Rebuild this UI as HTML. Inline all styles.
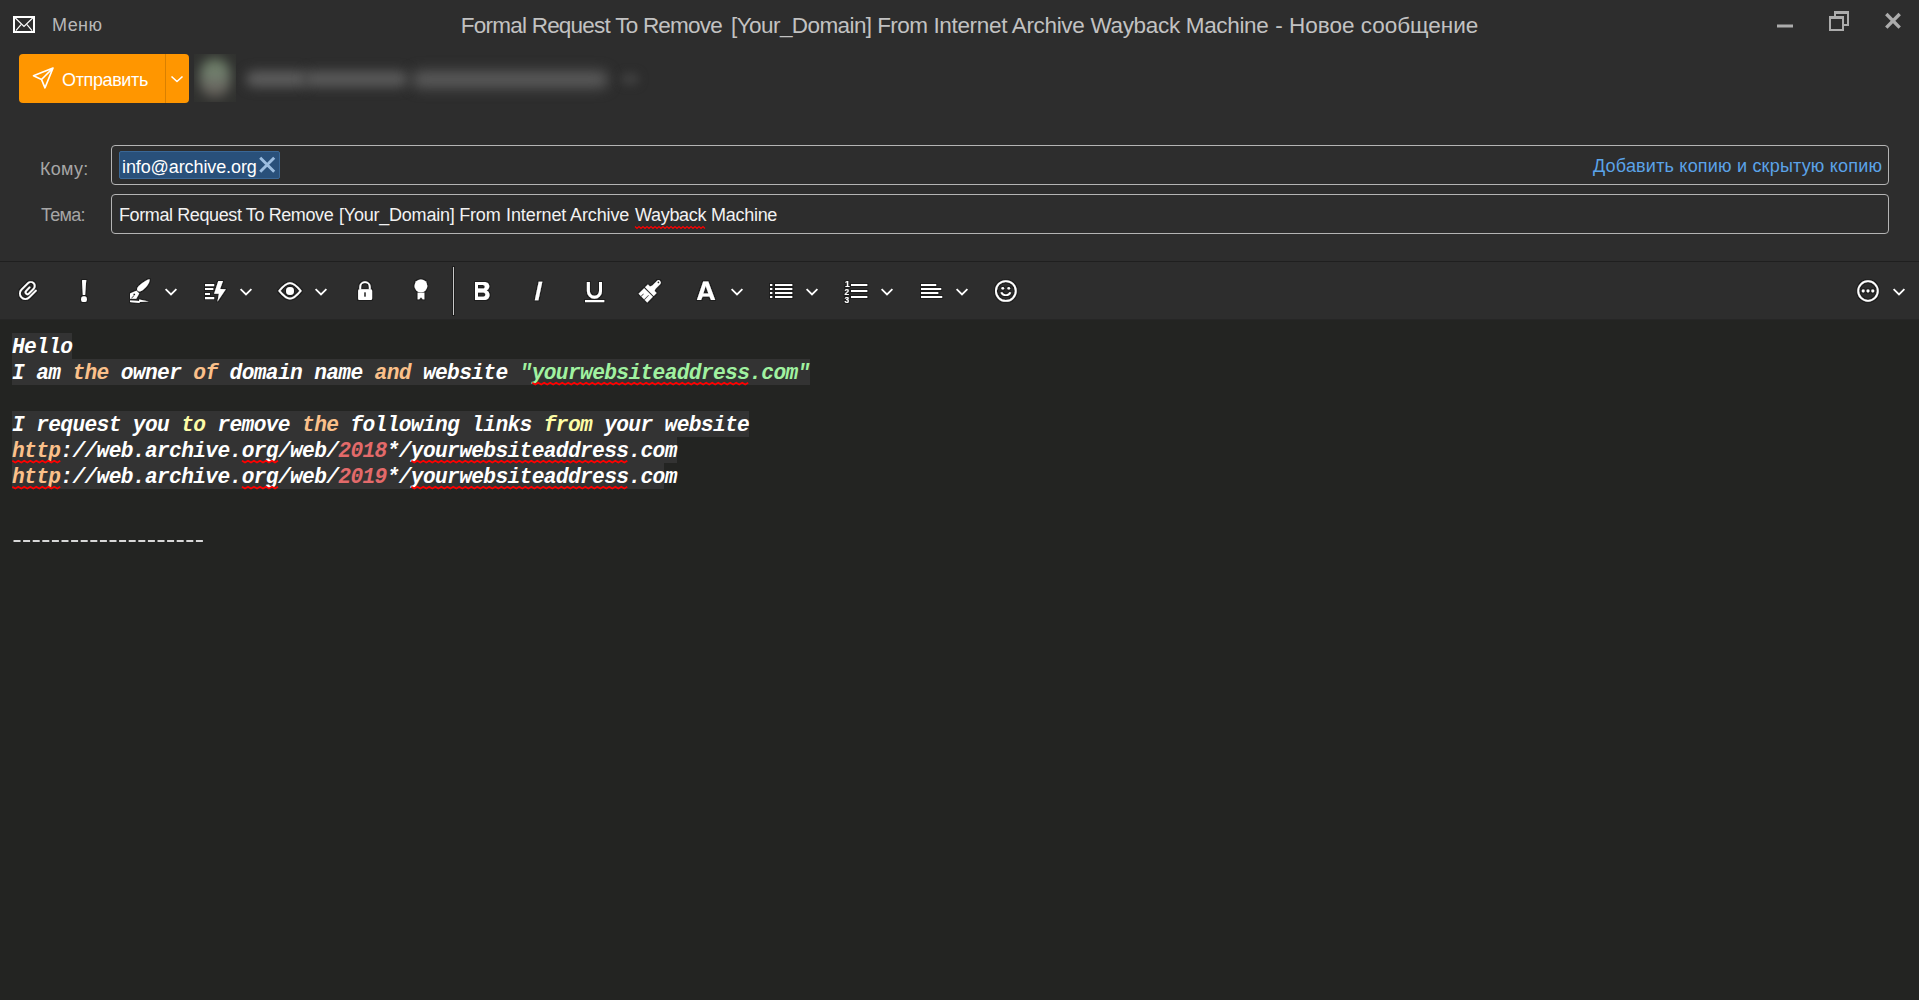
<!DOCTYPE html>
<html><head><meta charset="utf-8">
<style>
*{margin:0;padding:0;box-sizing:border-box}
html,body{width:1919px;height:1000px;overflow:hidden;background:#232422;font-family:"Liberation Sans",sans-serif}
.abs{position:absolute}
#hdr{position:absolute;left:0;top:0;width:1919px;height:261px;background:#2d2d2d}
#hline{position:absolute;left:0;top:261px;width:1919px;height:1px;background:#1f1f1f}
#tb{position:absolute;left:0;top:262px;width:1919px;height:58px;background:#2d2d2d}
.t{position:absolute;white-space:pre;line-height:1;transform-origin:0 0}
.ttl{top:15px;font-size:22.5px;color:#c2c2c2}
#menu{left:52px;top:16px;font-size:18px;letter-spacing:0.45px;color:#b8b8b8}
#send{left:19px;top:54px;width:170px;height:49px;background:#ff9600;border-radius:4px}
#senddiv{left:165px;top:54px;width:1px;height:49px;background:#d98000}
#sendtxt{left:62px;top:71px;font-size:18px;letter-spacing:-0.37px;color:#fff}
.box{position:absolute;border:1px solid #b4b4b4;border-radius:4px}
#tobox{left:111px;top:145px;width:1778px;height:40px}
#subbox{left:111px;top:194px;width:1778px;height:40px}
#chip{left:119px;top:151px;width:161px;height:28px;background:#29507a;border:1px solid #3a6796;border-radius:2px}
#lblto{left:40px;top:160px;font-size:18px;letter-spacing:0.3px;color:#a6a6a6}
#lblsub{left:41px;top:206px;font-size:18px;letter-spacing:-0.7px;color:#a6a6a6}
#chiptxt{left:122px;top:158px;font-size:18px;letter-spacing:-0.1px;color:#fff}
.stx{top:206px;font-size:18px;color:#f2f2f2}
#addcc{left:1593px;top:157px;font-size:18px;letter-spacing:0.2px;color:#5ba3e8}
#editor{position:absolute;left:0;top:320px;width:1919px;height:680px;background:#232422}
.ln{position:absolute;left:12px;height:26px;background:#333333}
.code{position:absolute;left:12px;font-family:"Liberation Mono",monospace;font-weight:bold;font-style:italic;font-size:21.2px;letter-spacing:-0.63px;line-height:26px;color:#fff;white-space:pre}
.o{color:#fbc08a}.y{color:#fdfca6}.g{color:#a0f2a0}.r{color:#e36a6a}
</style></head><body>
<div id="hdr"></div>
<div id="hline"></div>
<div id="tb"></div>
<div id="editor"></div>
<div class="abs" style="left:0;top:319px;width:1919px;height:1px;background:#262626"></div>

<!-- title bar -->
<svg class="abs" style="left:13px;top:16px" width="22" height="17" viewBox="0 0 22 17">
<rect x="1" y="1" width="20" height="15" fill="none" stroke="#fff" stroke-width="2"/>
<path d="M2.3 2 L11 10.4 L19.7 2 M2.9 14.6 L8 8.6 M19.1 14.6 L14 8.6" fill="none" stroke="#fff" stroke-width="1.2"/>
</svg>
<div id="menu" class="t">Меню</div>
<div class="t ttl" style="left:460.75px;letter-spacing:-0.766px">Formal Request To Remove</div><div class="t ttl" style="left:731.1px;letter-spacing:-0.583px">[Your_Domain] From</div><div class="t ttl" style="left:933.4px;letter-spacing:-0.328px">Internet Archive Wayback Machine</div><div class="t ttl" style="left:1275.25px;letter-spacing:-0.009px">- Новое сообщение</div>

<div id="send" class="abs"></div>
<div id="senddiv" class="abs"></div>
<div id="sendtxt" class="t">Отправить</div>


<!-- blurred sender -->
<div class="abs" style="left:194px;top:54px;width:42px;height:48px;overflow:hidden;background:#30312f">
  <div class="abs" style="left:6px;top:4px;width:30px;height:40px;border-radius:15px;background:linear-gradient(#66765f,#72806f 40%,#696660 75%,#5a5650);filter:blur(6px)"></div>
</div>
<div class="abs" style="left:236px;top:50px;width:420px;height:56px;overflow:hidden">
  <div class="abs" style="left:10px;top:21px;width:62px;height:16px;border-radius:8px;background:#5d5d5d;filter:blur(6px)"></div>
  <div class="abs" style="left:68px;top:21px;width:104px;height:16px;border-radius:8px;background:#5a5a5a;filter:blur(6px)"></div>
  <div class="abs" style="left:176px;top:21px;width:196px;height:17px;border-radius:8px;background:#5a5a5a;filter:blur(6.5px)"></div>
  <div class="abs" style="left:385px;top:23px;width:18px;height:12px;border-radius:5px;background:#3e3e3e;filter:blur(4px)"></div>
</div>
<!-- fields -->
<div id="lblto" class="t">Кому:</div>
<div id="lblsub" class="t">Тема:</div>
<div id="tobox" class="box"></div>
<div id="subbox" class="box"></div>
<div id="chip" class="abs"></div>
<div id="chiptxt" class="t">info@archive.org</div>
<div class="t stx" style="left:119.0px;letter-spacing:-0.395px">Formal Request To Remove</div><div class="t stx" style="left:339.0px;letter-spacing:-0.222px">[Your_Domain] From</div><div class="t stx" style="left:506.1px;letter-spacing:-0.119px">Internet Archive</div><div class="t stx" style="left:634.9px;letter-spacing:-0.279px">Wayback Machine</div>
<div id="addcc" class="t">Добавить копию и скрытую копию</div>


<svg class="abs" style="left:0;top:0" width="1919" height="320" viewBox="0 0 1919 320">
<defs><filter id="halo" x="-20%" y="-20%" width="140%" height="140%"><feMorphology in="SourceAlpha" operator="dilate" radius="1" result="d"/><feGaussianBlur in="d" stdDeviation="0.4" result="b"/><feFlood flood-color="#111" flood-opacity="0.6"/><feComposite in2="b" operator="in" result="h"/><feMerge><feMergeNode in="h"/><feMergeNode in="SourceGraphic"/></feMerge></filter></defs>
<g fill="#fff" stroke="none" filter="url(#halo)">
<!-- paperclip -->
<path transform="translate(28 291) rotate(-45)" fill="none" stroke="#fff" stroke-width="1.8" stroke-linecap="round" d="M5.8 5.4 L-3.7 5.4 A5.45 5.45 0 0 1 -3.7 -5.5 L5.5 -5.5 A3.95 3.95 0 0 1 5.5 2.4 L-1.16 2.4 A1.9 1.9 0 0 1 -1.16 -1.4 L3.6 -1.4"/>
<!-- exclamation -->
<path d="M82 280.6 Q82 280 82.6 280 L85.6 280 Q86.2 280 86.2 280.6 L85.1 295 L82.9 295 Z"/>
<circle cx="84" cy="299.2" r="2.9"/>
<!-- signature pen -->
<path transform="translate(137.6 291) rotate(-43.5)" d="M0.3 0 C0.3 -2.6 3 -3 7 -2.8 C11 -2.6 15 -1.6 16.8 -0.4 C15.5 1.6 11.5 3 7 3 C2.5 3 0.3 2.2 0.3 0 Z"/>
<path d="M130 293.6 L136.4 290.8 L139.2 293.4 L136.2 298.8 L130 298.8 Z M133.2 294.6 a1 1 0 1 0 2 0 a1 1 0 1 0 -2 0 Z M131.2 297.9 L133.6 295.3 L134.2 295.9 L131.8 298.4 Z" fill-rule="evenodd"/>
<path d="M130 300.4 L139 301 L139.2 299.5 L148.8 301.5 L139.6 302 L139.6 302.9 L130 301.9 Z"/>
<!-- lines+bolt -->
<rect x="205" y="284" width="9.1" height="2.1"/>
<rect x="205" y="288" width="8.2" height="2"/>
<rect x="205" y="293" width="5" height="2"/>
<rect x="205" y="297" width="9.1" height="2.1"/>
<path d="M218.3 281 L223 281 L220.1 288.9 L225.8 289.2 L217.4 301.8 L218.9 293.7 L214.1 293.7 Z"/>
<!-- eye -->
<path d="M279.3 290.9 C283.2 286.2 286.2 283.2 290 283.2 C293.8 283.2 296.8 286.2 300.7 290.9 C296.8 295.6 293.8 298.6 290 298.6 C286.2 298.6 283.2 295.6 279.3 290.9 Z" fill="none" stroke="#fff" stroke-width="1.7" stroke-linejoin="round"/>
<circle cx="290" cy="291" r="4"/>
<!-- lock -->
<path d="M360.2 289.5 L360.2 287 A4.8 4.8 0 0 1 369.8 287 L369.8 289.5" fill="none" stroke="#fff" stroke-width="1.8"/>
<path d="M359.6 289.2 L370.6 289.2 Q372.1 289.2 372.1 290.7 L372.1 298.5 Q372.1 300 370.6 300 L359.6 300 Q358.1 300 358.1 298.5 L358.1 290.7 Q358.1 289.2 359.6 289.2 Z M364.1 292.2 L364.1 296.7 L365.9 296.7 L365.9 292.2 Z" fill-rule="evenodd"/>
<!-- award -->
<circle cx="420.9" cy="285.9" r="6.4"/>
<path d="M417.7 292.8 L424.3 292.8 L424.3 299.3 L422.8 299.3 L421 297.3 L419.2 299.3 L417.7 299.3 Z"/>
<!-- separator -->
<rect x="453" y="267" width="1" height="48" fill="#c8c8c8"/>
<!-- B -->
<path fill-rule="evenodd" d="M475 282 L484 282 C487.6 282 489.3 284.2 489.3 286.3 C489.3 288.2 488.2 289.6 486.6 290.4 C488.6 291.2 489.5 293 489.5 295 C489.5 298 487.2 300 484 300 L475 300 Z M478 285 L483 285 C484.2 285 484.8 285.9 484.8 286.8 C484.8 287.8 484.2 288.6 483 288.6 L478 288.6 Z M478 292.4 L483.3 292.4 C484.6 292.4 485.4 293.4 485.4 294.5 C485.4 295.7 484.6 296.7 483.3 296.7 L478 296.7 Z"/>
<!-- I -->
<path d="M538.7 281.7 L542.3 281.7 L538.4 300.3 L534.8 300.3 Z"/>
<!-- U -->
<path d="M588.4 282 L588.4 291.2 A6.05 6.05 0 0 0 600.5 291.2 L600.5 282" fill="none" stroke="#fff" stroke-width="3"/>
<rect x="585" y="300" width="19.2" height="2.1"/>
<!-- brush -->
<g transform="translate(650 291) rotate(-45)">
<path d="M-0.9 -6.1 L3.2 -6.1 L3.2 -3.3 Q4.6 -2.4 5.6 -2.3 L12 -2.3 A2.3 2.3 0 0 1 12 2.3 L5.6 2.3 Q4.6 2.4 3.2 3.3 L3.2 6.1 L-0.9 6.1 Z"/>
<circle cx="12.1" cy="-0.2" r="0.85" fill="#2d2d2d"/>
<path d="M-2.1 -6.1 L-2.1 6.1 L-10 6.1 L-10 -6.1 Z M-10.1 -2.9 L-6.5 -2.9 L-6.5 -2.1 L-10.1 -2.1 Z M-10.1 1.7 L-4 1.7 L-4 2.5 L-10.1 2.5 Z" fill-rule="evenodd"/>
</g>
<!-- A -->
<path fill-rule="evenodd" d="M703.2 281.6 L708.3 281.6 L715.2 300 L711 300 L709.4 296.4 L702.6 296.4 L701.1 300 L696.9 300 Z M705.7 285.9 L703.3 293.4 L708.4 293.4 Z"/>
<!-- bullet list -->
<rect x="770" y="284" width="2.2" height="2"/><rect x="770" y="288" width="2.2" height="2"/><rect x="770" y="292" width="2.2" height="2"/><rect x="770" y="296" width="2.2" height="2"/>
<rect x="775" y="284" width="17.2" height="2"/><rect x="775" y="288" width="17.2" height="2"/><rect x="775" y="292" width="17.2" height="2"/><rect x="775" y="296" width="17.2" height="2"/>
<!-- numbered -->
<text x="845" y="287.2" font-family="Liberation Sans" font-weight="bold" font-size="8.4">1</text>
<text x="844.6" y="295.2" font-family="Liberation Sans" font-weight="bold" font-size="8.4">2</text>
<text x="844.6" y="303" font-family="Liberation Sans" font-weight="bold" font-size="8.4">3</text>
<rect x="851" y="284" width="16.2" height="2"/><rect x="851" y="290" width="16.2" height="2"/><rect x="851" y="296" width="16.2" height="2"/>
<!-- align left -->
<rect x="921" y="284" width="15.1" height="2"/><rect x="921" y="288" width="20.1" height="2"/><rect x="921" y="292" width="17.2" height="2"/><rect x="921" y="296" width="21.1" height="2"/>
<!-- smiley -->
<circle cx="1005.85" cy="291" r="9.95" fill="none" stroke="#fff" stroke-width="1.8"/>
<circle cx="1002.8" cy="288.2" r="1.3"/><circle cx="1008.8" cy="288.2" r="1.3"/>
<path d="M1001.3 292.3 A5 5 0 0 0 1010.4 292.3" fill="none" stroke="#fff" stroke-width="1.7"/>
<!-- more -->
<circle cx="1868" cy="291" r="9.8" fill="none" stroke="#fff" stroke-width="1.8"/>
<circle cx="1863.2" cy="291" r="1.45"/><circle cx="1868" cy="291" r="1.45"/><circle cx="1872.8" cy="291" r="1.45"/>
</g>
<g fill="none" stroke="#fff" stroke-width="1.8">
<path d="M165.6 289.1 L171.0 294.4 L176.4 289.1"/>
<path d="M240.6 289.1 L246.0 294.4 L251.4 289.1"/>
<path d="M315.6 289.1 L321.0 294.4 L326.4 289.1"/>
<path d="M731.6 289.1 L737.0 294.4 L742.4 289.1"/>
<path d="M806.6 289.1 L812.0 294.4 L817.4 289.1"/>
<path d="M881.6 289.1 L887.0 294.4 L892.4 289.1"/>
<path d="M956.6 289.1 L962.0 294.4 L967.4 289.1"/>
<path d="M1893.6 289.1 L1899.0 294.4 L1904.4 289.1"/>
</g>
<!-- window controls -->
<g fill="#acacac" stroke="none">
<rect x="1777" y="24.5" width="16" height="3"/>
<path fill-rule="evenodd" d="M1834 11 L1849 11 L1849 26 L1834 26 Z M1836 14 L1847 14 L1847 24 L1836 24 Z"/>
<rect x="1829" y="16" width="15" height="15" fill="#2d2d2d"/>
<path fill-rule="evenodd" d="M1829 16 L1844 16 L1844 31 L1829 31 Z M1831 19 L1842 19 L1842 29 L1831 29 Z"/>
<path d="M1886.3 14 L1899.7 27.6 M1899.7 14 L1886.3 27.6" fill="none" stroke="#acacac" stroke-width="3.4"/>
</g>
<!-- send icon -->
<g fill="none" stroke="#fff" stroke-width="1.7" stroke-linejoin="round">
<path d="M53 68 L33.5 75.8 L41.5 79.5 L45 87.8 Z M53 68 L41.5 79.5"/>
<path d="M171.5 76.5 L177 81.5 L182.5 76.5" stroke-width="1.6"/>
</g>
<!-- chip x -->
<path d="M260.2 157.8 L274.2 171.8 M274.2 157.8 L260.2 171.8" fill="none" stroke="#9cbde0" stroke-width="2.9"/>
</svg>

<!-- editor -->
<div class="ln" style="top:333px;width:60px"></div>
<div class="ln" style="top:359px;width:798px"></div>
<div class="ln" style="top:411px;width:737px"></div>
<div class="ln" style="top:437px;width:665px"></div>
<div class="ln" style="top:463px;width:652px"></div>
<div class="code" style="top:334px">Hello
I am <span class="o">the</span> owner <span class="o">of</span> domain name <span class="o">and</span> website <span class="g">"<span class="sq">yourwebsiteaddress</span>.com"</span>

I request you <span class="y">to</span> remove <span class="o">the</span> following links <span class="y">from</span> your website
<span class="o sq">http</span>://web.archive.<span class="sq">org</span>/web/<span class="r">2018</span>*/<span class="sq">yourwebsiteaddress</span>.com
<span class="o sq">http</span>://web.archive.<span class="sq">org</span>/web/<span class="r">2019</span>*/<span class="sq">yourwebsiteaddress</span>.com
</div>
<svg class="abs" style="left:0;top:0" width="1919" height="500" viewBox="0 0 1919 500"><g fill="none" stroke="#ff0000" stroke-linejoin="miter"><path stroke-width="1.75" d="M532.2 382.7 L535.2 384.5 L538.2 382.7 L541.2 384.5 L544.2 382.7 L547.2 384.5 L550.2 382.7 L553.2 384.5 L556.2 382.7 L559.2 384.5 L562.2 382.7 L565.2 384.5 L568.2 382.7 L571.2 384.5 L574.2 382.7 L577.2 384.5 L580.2 382.7 L583.2 384.5 L586.2 382.7 L589.2 384.5 L592.2 382.7 L595.2 384.5 L598.2 382.7 L601.2 384.5 L604.2 382.7 L607.2 384.5 L610.2 382.7 L613.2 384.5 L616.2 382.7 L619.2 384.5 L622.2 382.7 L625.2 384.5 L628.2 382.7 L631.2 384.5 L634.2 382.7 L637.2 384.5 L640.2 382.7 L643.2 384.5 L646.2 382.7 L649.2 384.5 L652.2 382.7 L655.2 384.5 L658.2 382.7 L661.2 384.5 L664.2 382.7 L667.2 384.5 L670.2 382.7 L673.2 384.5 L676.2 382.7 L679.2 384.5 L682.2 382.7 L685.2 384.5 L688.2 382.7 L691.2 384.5 L694.2 382.7 L697.2 384.5 L700.2 382.7 L703.2 384.5 L706.2 382.7 L709.2 384.5 L712.2 382.7 L715.2 384.5 L718.2 382.7 L721.2 384.5 L724.2 382.7 L727.2 384.5 L730.2 382.7 L733.2 384.5 L736.2 382.7 L739.2 384.5 L742.2 382.7 L745.2 384.5 L748.2 382.7"/><path stroke-width="1.75" d="M12.3 460.7 L15.3 462.5 L18.3 460.7 L21.3 462.5 L24.3 460.7 L27.3 462.5 L30.3 460.7 L33.3 462.5 L36.3 460.7 L39.3 462.5 L42.3 460.7 L45.3 462.5 L48.3 460.7 L51.3 462.5 L54.3 460.7 L57.3 462.5 L60.3 460.7"/><path stroke-width="1.75" d="M242.0 460.7 L245.0 462.5 L248.0 460.7 L251.0 462.5 L254.0 460.7 L257.0 462.5 L260.0 460.7 L263.0 462.5 L266.0 460.7 L269.0 462.5 L272.0 460.7 L275.0 462.5 L278.0 460.7"/><path stroke-width="1.75" d="M411.3 460.7 L414.3 462.5 L417.3 460.7 L420.3 462.5 L423.3 460.7 L426.3 462.5 L429.3 460.7 L432.3 462.5 L435.3 460.7 L438.3 462.5 L441.3 460.7 L444.3 462.5 L447.3 460.7 L450.3 462.5 L453.3 460.7 L456.3 462.5 L459.3 460.7 L462.3 462.5 L465.3 460.7 L468.3 462.5 L471.3 460.7 L474.3 462.5 L477.3 460.7 L480.3 462.5 L483.3 460.7 L486.3 462.5 L489.3 460.7 L492.3 462.5 L495.3 460.7 L498.3 462.5 L501.3 460.7 L504.3 462.5 L507.3 460.7 L510.3 462.5 L513.3 460.7 L516.3 462.5 L519.3 460.7 L522.3 462.5 L525.3 460.7 L528.3 462.5 L531.3 460.7 L534.3 462.5 L537.3 460.7 L540.3 462.5 L543.3 460.7 L546.3 462.5 L549.3 460.7 L552.3 462.5 L555.3 460.7 L558.3 462.5 L561.3 460.7 L564.3 462.5 L567.3 460.7 L570.3 462.5 L573.3 460.7 L576.3 462.5 L579.3 460.7 L582.3 462.5 L585.3 460.7 L588.3 462.5 L591.3 460.7 L594.3 462.5 L597.3 460.7 L600.3 462.5 L603.3 460.7 L606.3 462.5 L609.3 460.7 L612.3 462.5 L615.3 460.7 L618.3 462.5 L621.3 460.7 L624.3 462.5 L627.3 460.7"/><path stroke-width="1.75" d="M12.3 486.7 L15.3 488.5 L18.3 486.7 L21.3 488.5 L24.3 486.7 L27.3 488.5 L30.3 486.7 L33.3 488.5 L36.3 486.7 L39.3 488.5 L42.3 486.7 L45.3 488.5 L48.3 486.7 L51.3 488.5 L54.3 486.7 L57.3 488.5 L60.3 486.7"/><path stroke-width="1.75" d="M242.0 486.7 L245.0 488.5 L248.0 486.7 L251.0 488.5 L254.0 486.7 L257.0 488.5 L260.0 486.7 L263.0 488.5 L266.0 486.7 L269.0 488.5 L272.0 486.7 L275.0 488.5 L278.0 486.7"/><path stroke-width="1.75" d="M411.3 486.7 L414.3 488.5 L417.3 486.7 L420.3 488.5 L423.3 486.7 L426.3 488.5 L429.3 486.7 L432.3 488.5 L435.3 486.7 L438.3 488.5 L441.3 486.7 L444.3 488.5 L447.3 486.7 L450.3 488.5 L453.3 486.7 L456.3 488.5 L459.3 486.7 L462.3 488.5 L465.3 486.7 L468.3 488.5 L471.3 486.7 L474.3 488.5 L477.3 486.7 L480.3 488.5 L483.3 486.7 L486.3 488.5 L489.3 486.7 L492.3 488.5 L495.3 486.7 L498.3 488.5 L501.3 486.7 L504.3 488.5 L507.3 486.7 L510.3 488.5 L513.3 486.7 L516.3 488.5 L519.3 486.7 L522.3 488.5 L525.3 486.7 L528.3 488.5 L531.3 486.7 L534.3 488.5 L537.3 486.7 L540.3 488.5 L543.3 486.7 L546.3 488.5 L549.3 486.7 L552.3 488.5 L555.3 486.7 L558.3 488.5 L561.3 486.7 L564.3 488.5 L567.3 486.7 L570.3 488.5 L573.3 486.7 L576.3 488.5 L579.3 486.7 L582.3 488.5 L585.3 486.7 L588.3 488.5 L591.3 486.7 L594.3 488.5 L597.3 486.7 L600.3 488.5 L603.3 486.7 L606.3 488.5 L609.3 486.7 L612.3 488.5 L615.3 486.7 L618.3 488.5 L621.3 486.7 L624.3 488.5 L627.3 486.7"/><path stroke-width="1.1" d="M635 226.5 L637 228.5 L639 226.5 L641 228.5 L643 226.5 L645 228.5 L647 226.5 L649 228.5 L651 226.5 L653 228.5 L655 226.5 L657 228.5 L659 226.5 L661 228.5 L663 226.5 L665 228.5 L667 226.5 L669 228.5 L671 226.5 L673 228.5 L675 226.5 L677 228.5 L679 226.5 L681 228.5 L683 226.5 L685 228.5 L687 226.5 L689 228.5 L691 226.5 L693 228.5 L695 226.5 L697 228.5 L699 226.5 L701 228.5 L703 226.5 L705 228.5"/></g></svg>
<svg class="abs" style="left:0;top:520px" width="260" height="40" viewBox="0 520 260 40"><g fill="#d8d8d8"><rect x="13.5" y="540" width="7" height="2"/><rect x="23.1" y="540" width="7" height="2"/><rect x="32.7" y="540" width="7" height="2"/><rect x="42.3" y="540" width="7" height="2"/><rect x="51.9" y="540" width="7" height="2"/><rect x="61.5" y="540" width="7" height="2"/><rect x="71.1" y="540" width="7" height="2"/><rect x="80.7" y="540" width="7" height="2"/><rect x="90.3" y="540" width="7" height="2"/><rect x="99.9" y="540" width="7" height="2"/><rect x="109.5" y="540" width="7" height="2"/><rect x="119.1" y="540" width="7" height="2"/><rect x="128.7" y="540" width="7" height="2"/><rect x="138.3" y="540" width="7" height="2"/><rect x="147.9" y="540" width="7" height="2"/><rect x="157.5" y="540" width="7" height="2"/><rect x="167.1" y="540" width="7" height="2"/><rect x="176.7" y="540" width="7" height="2"/><rect x="186.3" y="540" width="7" height="2"/><rect x="195.9" y="540" width="7" height="2"/></g></svg>
</body></html>
